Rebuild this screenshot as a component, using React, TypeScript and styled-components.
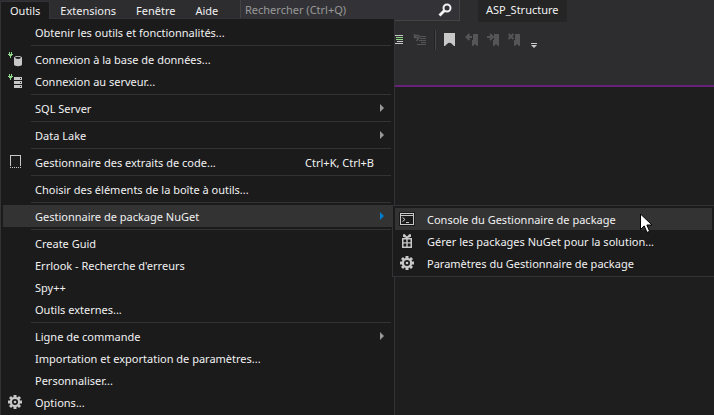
import React from "react";
import styled, { createGlobalStyle, css } from "styled-components";

const color = {
  chrome: "#2d2d30",
  menu: "#1b1b1c",
  border: "#333337",
  hover: "#333334",
  text: "#f1f1f1",
  muted: "#999999",
  icon: "#c8c8c8",
  disabled: "#555558",
  green: "#8fd68a",
  accent: "#007acc",
  purple: "#68217a",
  editor: "#1e1e1e",
};

const GlobalStyle = createGlobalStyle`
  *, *::before, *::after { box-sizing: border-box; }
  body {
    margin: 0;
    background: ${color.editor};
    color: ${color.text};
    font: 11px/16px "Noto Sans", "Open Sans", sans-serif;
  }
  button, input { font: inherit; color: inherit; }
`;

const Shell = styled.div`
  position: relative;
  display: flex;
  flex-direction: column;
  height: 100vh;
  overflow: hidden;
`;

const Header = styled.header`
  background: ${color.chrome};
  border-bottom: 2px solid ${color.purple};
  padding-bottom: 31px;
`;

const TopBar = styled.div`
  display: flex;
  align-items: flex-start;
  height: 22px;
`;

const MenuBar = styled.nav`
  position: relative;
  display: flex;
  width: 240px;
  height: 19px;
  flex: none;
`;

const MenuTab = styled.button<{ $open?: boolean }>`
  position: relative;
  z-index: ${(p) => (p.$open ? 2 : 0)};
  height: 18px;
  margin: 1px 0 0;
  padding: 0 9px;
  line-height: 16px;
  border: 1px solid ${(p) => (p.$open ? color.border : "transparent")};
  border-bottom: 0;
  background: ${(p) => (p.$open ? color.menu : "transparent")};
`;

const SearchBox = styled.label`
  display: flex;
  align-items: center;
  width: 220px;
  height: 21px;
  padding: 0 7px 0 4px;
  background: #333337;
  border: 1px solid #434346;
  border-top: 0;
`;

const SearchInput = styled.input`
  flex: 1;
  min-width: 0;
  padding: 0;
  border: 0;
  outline: 0;
  background: transparent;
  &::placeholder { color: ${color.muted}; opacity: 1; }
`;

const SolutionName = styled.div`
  height: 22px;
  margin-left: 18px;
  padding: 2px 8px;
  background: #252526;
`;

const Toolbar = styled.div`
  display: flex;
  align-items: center;
  gap: 5px;
  height: 28px;
  margin-top: 4px;
  padding-left: 389px;
`;

const ToolButton = styled.button`
  display: flex;
  padding: 0;
  border: 0;
  background: none;
`;

const OverflowButton = styled(ToolButton)`
  margin-left: 4px;
`;

const ToolDivider = styled.span`
  width: 2px;
  height: 20px;
  margin: 0 2px 0 3px;
  border-left: 1px solid #222224;
  background: #46464a;
`;

const menuSurface = css`
  position: absolute;
  margin: 0;
  padding: 2px;
  list-style: none;
  background: ${color.menu};
  border: 1px solid ${color.border};
`;

const Menu = styled.ul`
  ${menuSurface}
  z-index: 1;
  top: 18px;
  left: 0;
  width: 395px;
`;

const Submenu = styled.ul`
  ${menuSurface}
  top: 0;
  left: 100%;
  width: 323px;
`;

const MenuItem = styled.li`
  position: relative;
`;

const MenuRow = styled.button<{ $active?: boolean }>`
  display: grid;
  grid-template-columns: 16px 1fr auto 10px;
  align-items: center;
  width: 100%;
  height: 22px;
  padding: 0 8px 0 4px;
  border: 0;
  text-align: left;
  background: ${(p) => (p.$active ? color.hover : "transparent")};
`;

const RowIcon = styled.span`
  display: flex;
  height: 16px;
`;

const RowLabel = styled.span`
  padding: 2px 0 0 12px;
  white-space: nowrap;
`;

const Shortcut = styled.span`
  padding-top: 2px;
`;

const Arrow = styled.svg`
  justify-self: end;
`;

const Separator = styled.li`
  height: 1px;
  margin: 2px 1px 2px 28px;
  background: ${color.border};
`;

const Pointer = styled.svg`
  position: absolute;
  z-index: 3;
  top: 213px;
  left: 640px;
  pointer-events: none;
`;

const Svg = ({ children, fill = color.icon }: { children: React.ReactNode; fill?: string }) => (
  <svg width="16" height="16" viewBox="0 0 16 16" fill={fill} aria-hidden="true">
    {children}
  </svg>
);

const Plug = () => (
  <path fill={color.green} d="M2 1h1v2h1V1h1v2h1v1H5v1H4v2H3V5H2V4H1V3h1z" />
);

const DatabaseIcon = () => (
  <Svg>
    <Plug />
    <path d="M7 7c0-2.600 8-2.600 8 0v6.500c0 2.300-8 2.300-8 0z" />
    <ellipse cx="11" cy="6.800" rx="2.900" ry="1.100" fill={color.menu} />
  </Svg>
);

const ServerIcon = () => (
  <Svg>
    <Plug />
    <path d="M7 4h8v3H7zM7 8h8v3H7zM7 12h8v3H7z" />
    <path fill={color.menu} d="M13 5h1v1h-1zM13 9h1v1h-1zM13 13h1v1h-1z" />
  </Svg>
);

const SnippetIcon = () => (
  <Svg>
    <path d="M3 1h11v11h-1V2H4v10H3zM3 13h1v1H3zM5 13h1v1H5zM7 13h1v1H7zM9 13h1v1H9zM11 13h1v1h-1zM13 13h1v1h-1z" />
  </Svg>
);

const GearIcon = () => (
  <Svg>
    <path
      fillRule="evenodd"
      d="M6.500 1h3v2l1 .4L12 2l2 2-1.400 1.500.4 1h2v3h-2l-.4 1L14 12l-2 2-1.500-1.400-1 .4v2h-3v-2l-1-.4L4 14l-2-2 1.400-1.500-.4-1H1v-3h2l.4-1L2 4l2-2 1.500 1.400 1-.4zM8 5a3 3 0 1 0 0 6 3 3 0 0 0 0-6z"
    />
    <circle cx="8" cy="8" r="1.300" />
  </Svg>
);

const ConsoleIcon = () => (
  <Svg>
    <path fill={color.menu} d="M0 1h16v14H0z" />
    <path fillRule="evenodd" d="M1 2h14v12H1zM2 5v8h12V5zM2 3v1h12V3z" />
    <path fill="none" stroke={color.icon} d="M3.500 6.500L6 8.500 3.500 10.500M7 11.500h3" />
  </Svg>
);

const GiftIcon = () => (
  <Svg>
    <path
      fillRule="evenodd"
      d="M3 5h4.200L4 3.800V1.500L5.500 1 8 3.600 10.500 1l1.500.5v2.300L8.800 5H13v10H3zM4.500 6.500v2.700h2.800V6.500zM8.700 6.500v2.700h2.800V6.500zM4.500 10.500v3h2.800v-3zM8.700 10.500v3h2.800v-3z"
    />
  </Svg>
);

const IndentIcon = () => (
  <Svg>
    <path d="M4 3h10v1H4zM8 9h6v1H8zM5 11h9v1H5z" />
    <path fill={color.green} d="M7 5h7v1H7zM7 7h7v1H7z" />
  </Svg>
);

const UnindentIcon = () => (
  <Svg fill={color.disabled}>
    <path d="M10 4h6v1h-6zM10 6h6v1h-6zM9 8h7v1H9zM11 10h5v1h-5zM7 12h9v1H7z" />
    <path fill="none" stroke={color.disabled} strokeWidth="1.500" d="M4.500 2v3.500H8M5 5c1.500-2.500 4.500-2 4 .5C8.500 7 7.500 7.500 6.500 9" />
  </Svg>
);

const BookmarkIcon = () => (
  <Svg>
    <path d="M1 1h11v13h-1l-2-2a3.500 3.500 0 0 0-5 0l-2 2H1z" />
  </Svg>
);

const SmallBookmark = ({ mark }: { mark: string }) => (
  <Svg fill={color.disabled}>
    <path d="M9 2h5v12h-1l-2-2-2 2H8V8h1z" />
    <path fill="none" stroke={color.disabled} strokeWidth="2" d={mark} />
  </Svg>
);

const OverflowIcon = () => (
  <svg width="7" height="16" viewBox="0 0 7 16" fill={color.icon} aria-hidden="true">
    <path d="M0 11h6v1H0zM0 13h6l-3 3z" />
  </svg>
);

type Entry = {
  label: string;
  icon?: React.ReactNode;
  shortcut?: string;
  arrow?: boolean;
  active?: boolean;
  submenu?: Entry[];
};

const nugetEntries: Entry[] = [
  { label: "Console du Gestionnaire de package", icon: <ConsoleIcon />, active: true },
  { label: "Gérer les packages NuGet pour la solution...", icon: <GiftIcon /> },
  { label: "Paramètres du Gestionnaire de package", icon: <GearIcon /> },
];

const groups: Entry[][] = [
  [{ label: "Obtenir les outils et fonctionnalités..." }],
  [
    { label: "Connexion à la base de données...", icon: <DatabaseIcon /> },
    { label: "Connexion au serveur...", icon: <ServerIcon /> },
  ],
  [{ label: "SQL Server", arrow: true }],
  [{ label: "Data Lake", arrow: true }],
  [{ label: "Gestionnaire des extraits de code...", icon: <SnippetIcon />, shortcut: "Ctrl+K, Ctrl+B" }],
  [{ label: "Choisir des éléments de la boîte à outils..." }],
  [{ label: "Gestionnaire de package NuGet", arrow: true, active: true, submenu: nugetEntries }],
  [
    { label: "Create Guid" },
    { label: "Errlook - Recherche d'erreurs" },
    { label: "Spy++" },
    { label: "Outils externes..." },
  ],
  [
    { label: "Ligne de commande", arrow: true },
    { label: "Importation et exportation de paramètres..." },
    { label: "Personnaliser..." },
    { label: "Options...", icon: <GearIcon /> },
  ],
];

const Item = ({ entry }: { entry: Entry }) => (
  <MenuItem role="none">
    <MenuRow role="menuitem" $active={entry.active} aria-haspopup={entry.arrow ? "menu" : undefined}>
      <RowIcon>{entry.icon}</RowIcon>
      <RowLabel>{entry.label}</RowLabel>
      <Shortcut>{entry.shortcut}</Shortcut>
      {entry.arrow && (
        <Arrow width="4" height="8" viewBox="0 0 4 8" fill={entry.active ? color.accent : color.muted} aria-hidden="true">
          <path d="M0 0l4 4-4 4z" />
        </Arrow>
      )}
    </MenuRow>
    {entry.submenu && (
      <Submenu role="menu" aria-label={entry.label}>
        {entry.submenu.map((child) => (
          <Item key={child.label} entry={child} />
        ))}
      </Submenu>
    )}
  </MenuItem>
);

export default function App() {
  return (
    <Shell>
      <GlobalStyle />
      <Header>
        <TopBar>
          <MenuBar>
            <MenuTab $open aria-expanded="true">Outils</MenuTab>
            <MenuTab>Extensions</MenuTab>
            <MenuTab>Fenêtre</MenuTab>
            <MenuTab>Aide</MenuTab>
            <Menu role="menu" aria-label="Outils">
              {groups.map((group, i) => (
                <React.Fragment key={group[0].label}>
                  {i > 0 && <Separator role="separator" />}
                  {group.map((entry) => (
                    <Item key={entry.label} entry={entry} />
                  ))}
                </React.Fragment>
              ))}
            </Menu>
          </MenuBar>
          <SearchBox>
            <SearchInput type="text" placeholder="Rechercher (Ctrl+Q)" aria-label="Rechercher" />
            <svg width="14" height="14" viewBox="0 0 14 14" fill="none" stroke={color.text} aria-hidden="true">
              <circle cx="9" cy="5" r="3.500" strokeWidth="2" />
              <path d="M6.500 7.500L1.500 12.500" strokeWidth="2.800" />
            </svg>
          </SearchBox>
          <SolutionName>ASP_Structure</SolutionName>
        </TopBar>
        <Toolbar>
          <ToolButton aria-label="Commenter les lignes"><IndentIcon /></ToolButton>
          <ToolButton aria-label="Annuler les commentaires" disabled><UnindentIcon /></ToolButton>
          <ToolDivider />
          <ToolButton aria-label="Signet"><BookmarkIcon /></ToolButton>
          <ToolButton aria-label="Signet précédent" disabled><SmallBookmark mark="M8 5H3M5.500 2L2.500 5l3 3" /></ToolButton>
          <ToolButton aria-label="Signet suivant" disabled><SmallBookmark mark="M2 5h6M5 2l3 3-3 3" /></ToolButton>
          <ToolButton aria-label="Effacer les signets" disabled><SmallBookmark mark="M2.500 2l5 5M7.500 2l-5 5" /></ToolButton>
          <OverflowButton aria-label="Options de la barre d'outils"><OverflowIcon /></OverflowButton>
        </Toolbar>
      </Header>
      <Pointer width="13" height="21" viewBox="0 0 13 21" fill="#fff" stroke="#000" aria-hidden="true">
        <path d="M.5 1v15.500l3.700-3.600 2.800 6.600 2.600-1.200-2.700-6.300H12z" />
      </Pointer>
    </Shell>
  );
}
